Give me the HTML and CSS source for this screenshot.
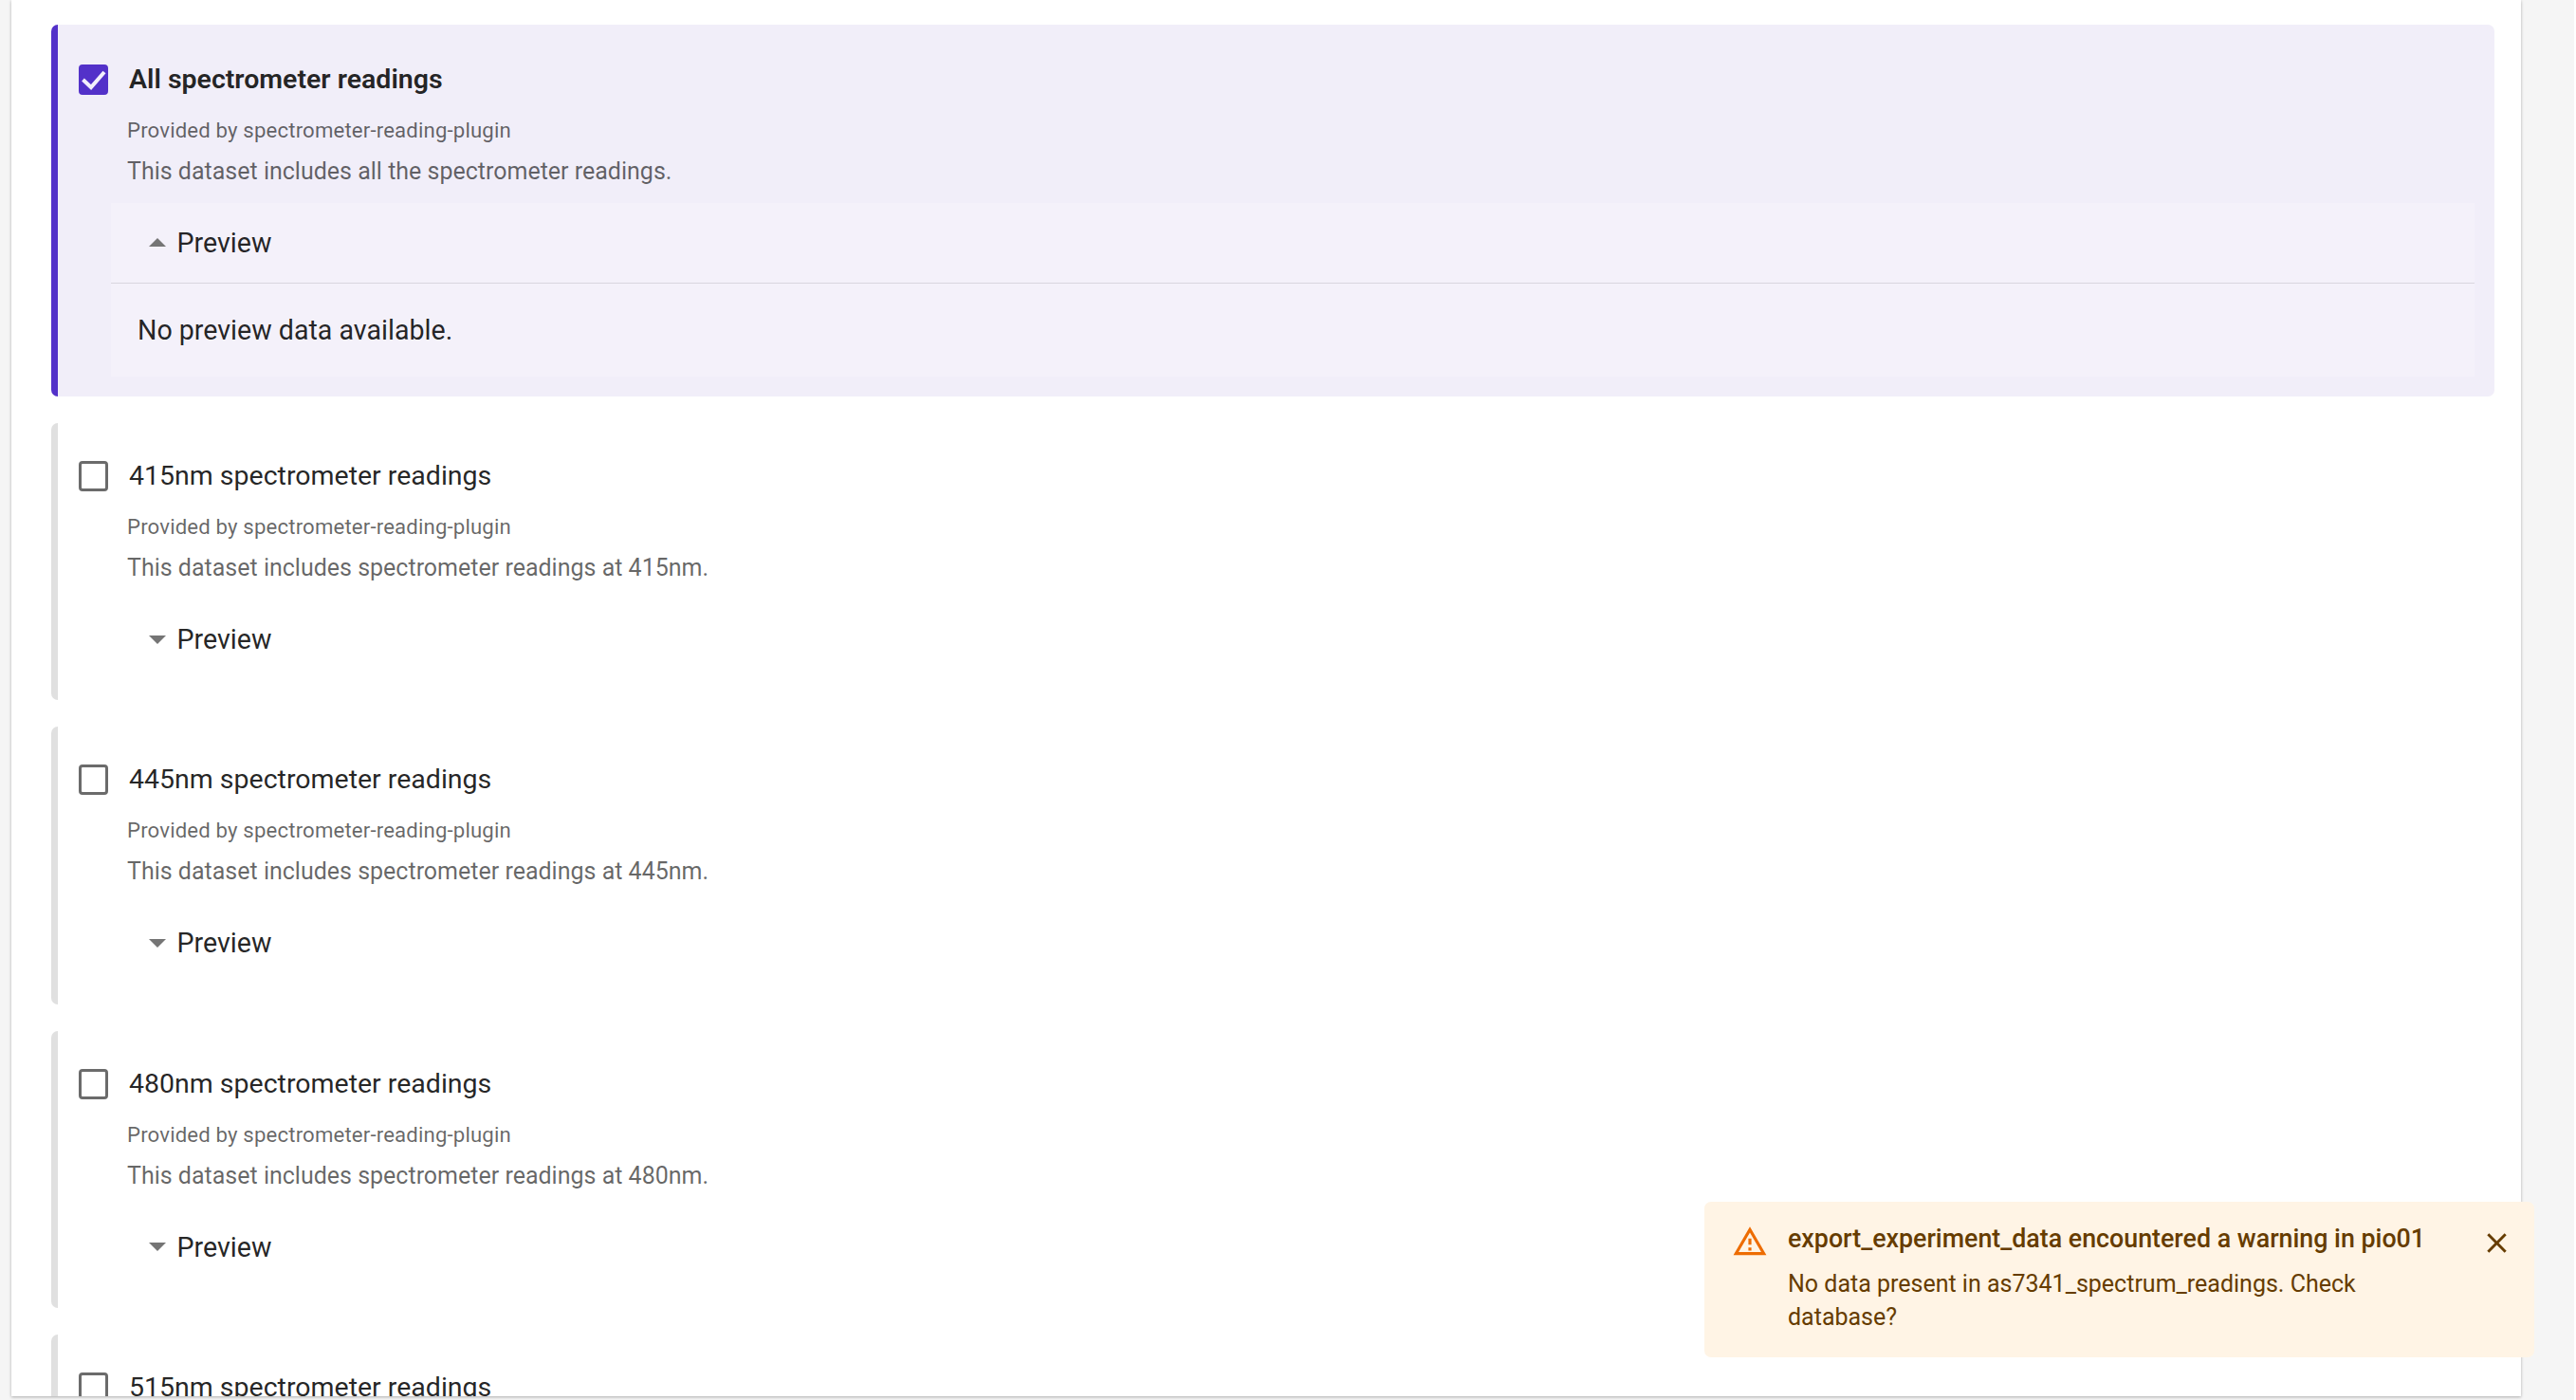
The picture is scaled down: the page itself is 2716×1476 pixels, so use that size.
FILE: index.html
```html
<!DOCTYPE html>
<html lang="en">
<head>
<meta charset="utf-8">
<title>Export data</title>
<link rel="stylesheet" href="styles.css">
</head>
<body>
<main class="panel">
  <section class="card card-selected">
    <div class="head">
      <span class="check check-on"><svg viewBox="0 0 32 32" width="32" height="32"><path d="M4.5 16l8.5 8L27 8" fill="none" stroke="#f3effc" stroke-width="4"/></svg></span>
      <span class="title title-strong">All spectrometer readings</span>
    </div>
    <p class="source">Provided by spectrometer-reading-plugin</p>
    <p class="desc">This dataset includes all the spectrometer readings.</p>
    <div class="preview preview-open">
      <div class="preview-head"><span class="arrow arrow-up"></span><span>Preview</span></div>
      <div class="preview-body">No preview data available.</div>
    </div>
  </section>
  <section class="card">
    <div class="head"><span class="check"></span><span class="title">415nm spectrometer readings</span></div>
    <p class="source">Provided by spectrometer-reading-plugin</p>
    <p class="desc">This dataset includes spectrometer readings at 415nm.</p>
    <div class="preview"><div class="preview-head"><span class="arrow"></span><span>Preview</span></div></div>
  </section>
  <section class="card">
    <div class="head"><span class="check"></span><span class="title">445nm spectrometer readings</span></div>
    <p class="source">Provided by spectrometer-reading-plugin</p>
    <p class="desc">This dataset includes spectrometer readings at 445nm.</p>
    <div class="preview"><div class="preview-head"><span class="arrow"></span><span>Preview</span></div></div>
  </section>
  <section class="card">
    <div class="head"><span class="check"></span><span class="title">480nm spectrometer readings</span></div>
    <p class="source">Provided by spectrometer-reading-plugin</p>
    <p class="desc">This dataset includes spectrometer readings at 480nm.</p>
    <div class="preview"><div class="preview-head"><span class="arrow"></span><span>Preview</span></div></div>
  </section>
  <section class="card">
    <div class="head"><span class="check"></span><span class="title">515nm spectrometer readings</span></div>
    <p class="source">Provided by spectrometer-reading-plugin</p>
    <p class="desc">This dataset includes spectrometer readings at 515nm.</p>
  </section>
</main>
<aside class="toast">
  <svg class="toast-icon" viewBox="0 0 24 24" width="38" height="38"><path fill="#ed6c02" d="M12 5.99 19.53 19H4.47L12 5.99M12 2 1 21h22L12 2zm1 14h-2v2h2v-2zm0-6h-2v4h2v-4z"/></svg>
  <div class="toast-text">
    <div class="toast-title">export_experiment_data encountered a warning in pio01</div>
    <div class="toast-msg">No data present in as7341_spectrum_readings. Check database?</div>
  </div>
  <svg class="toast-close" viewBox="0 0 24 24" width="35" height="35"><path fill="#663c00" d="M19 6.41 17.59 5 12 10.59 6.41 5 5 6.41 10.59 12 5 17.59 6.41 19 12 13.41 17.59 19 19 17.59 13.41 12z"/></svg>
</aside>
</body>
</html>
```
FILE: styles.css
```css
html, body { margin: 0; height: 100%; overflow: hidden; }
html { background: #fff; }
body { background: #f5f5f5; font-family: Roboto, "Liberation Sans", sans-serif; color: rgba(0,0,0,.87); width: 2714px; height: 1476px; }
.panel {
  box-sizing: border-box; width: 2646px; height: 1472px; margin-left: 12px;
  background: #fff; box-shadow: 0 1px 3px rgba(0,0,0,.3);
  padding: 26px 28px 0 42px; overflow: hidden;
  display: flex; flex-direction: column; gap: 28px;
}
.card {
  flex: none; box-sizing: border-box; height: 292.4px; border-left: 7px solid #e0e0e0; border-radius: 7px;
  padding: 40px 21px 0 22px;
}
.card-selected { height: 392px; padding-top: 41.5px; background: #f1eef9; border-left-color: #5331c9; }
.head { display: flex; align-items: center; height: 32px; }
.check { flex: none; box-sizing: border-box; width: 31px; height: 32px; border: 3.5px solid #6b6b6b; border-radius: 4px; display: flex; align-items: center; justify-content: center; }
.check-on { background: #5331c9; border-color: #5331c9; }
.check-on svg { flex: none; }
.title { margin-left: 22px; font-size: 28.5px; line-height: 32px; }
.title-strong { font-weight: 600; font-size: 28.5px; }
.source { margin: 21px 0 0 51px; font-size: 22.2px; line-height: 32px; color: rgba(0,0,0,.6); letter-spacing: .15px; }
.desc { margin: 10px 0 0 51px; font-size: 25px; line-height: 36px; color: rgba(0,0,0,.6); }
.preview { margin: 15px 0 0 34px; }
.preview-open { background: #f4f1fa; height: 183px; }
.preview-head { box-sizing: border-box; height: 84px; padding-left: 40px; display: flex; align-items: center; gap: 11.5px; font-size: 28.6px; }
.preview-open .preview-head { border-bottom: 1px solid #d8d5de; height: 85px; }
.arrow { width: 0; height: 0; border-left: 9px solid transparent; border-right: 9px solid transparent; border-top: 9px solid #757575; }
.arrow-up { border-top: 0; border-bottom: 9px solid #757575; }
.preview-body { padding: 33px 28px 0; font-size: 28.6px; line-height: 32px; }
.toast {
  position: absolute; left: 1797px; top: 1267px; box-sizing: border-box; width: 875px; height: 164px;
  background: #fff4e5; border-radius: 7px; color: #663c00; display: flex; padding: 0 22px 0 28.5px;
}
.toast-icon { flex: none; margin-top: 23px; }
.toast-text { width: 680px; margin-left: 21.5px; padding-top: 21px; }
.toast-title { font-size: 26.8px; font-weight: 500; line-height: 36px; white-space: nowrap; }
.toast-msg { font-size: 25px; line-height: 35px; margin-top: 12px; }
.toast-close { flex: none; margin: 26px 0 0 auto; }
```
